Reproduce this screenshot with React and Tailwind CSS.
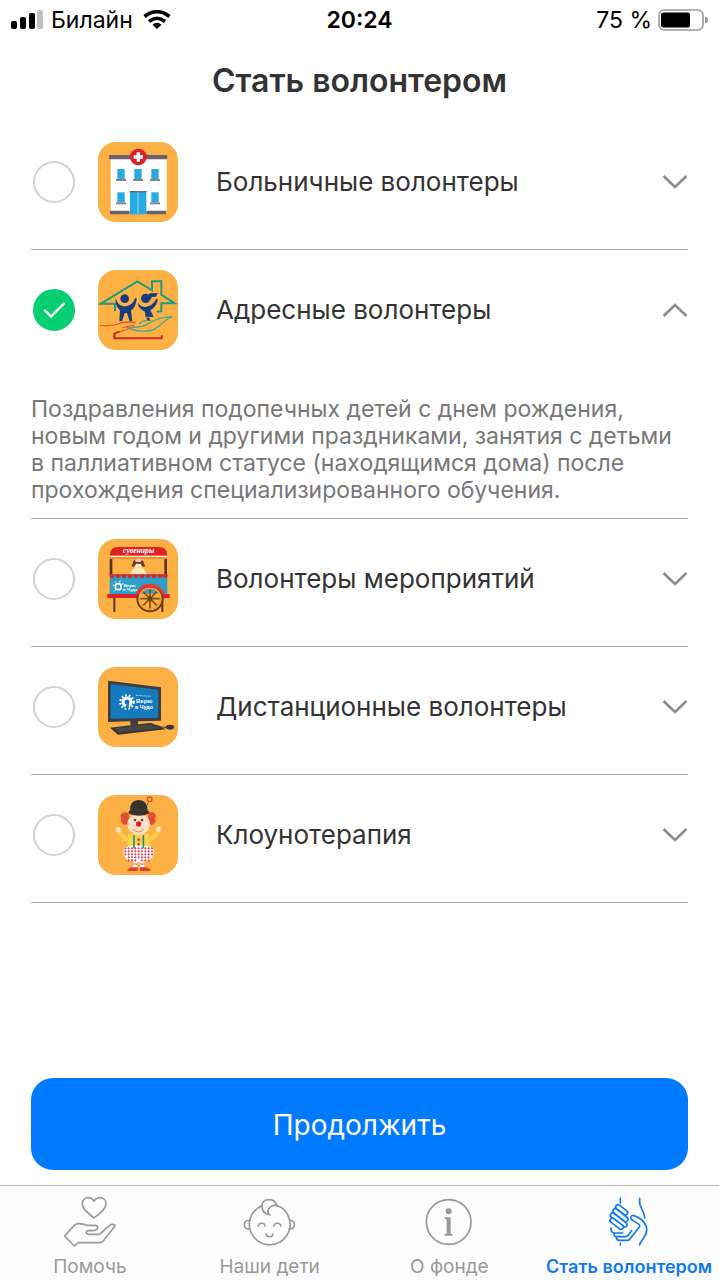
import React, { useState } from "react";

function Tile({ viewBox, x, y, children }) {
  return (
    <svg viewBox={viewBox} className="size-20 shrink-0" aria-hidden="true">
      <rect x={x} y={y} width="240" height="240" rx="54" fill="#fdb043" />
      {children}
    </svg>
  );
}

function HospitalIcon() {
  const windows = [
    [82, 102],
    [133, 102],
    [184, 102],
    [82, 172],
    [184, 172],
  ];
  return (
    <Tile viewBox="24 21 240 240" x={24} y={21}>
      <rect x="62" y="70" width="168" height="158" fill="#fff" />
      <rect x="57" y="60" width="175" height="13" rx="3" fill="#6d5f6b" />
      <path d="M60 227h58v11H60zM170 227h58v11h-58z" fill="#6d5f6b" />
      <circle cx="145" cy="66" r="25" fill="#e01f2d" />
      <path d="M140 52h10v9h9v10h-9v9h-10v-9h-9v-10h9z" fill="#fff" />
      {windows.map(([wx, wy]) => (
        <g key={`${wx}-${wy}`}>
          <rect x={wx} y={wy} width="22" height="30" fill="#27a9e1" />
          <rect x={wx - 4} y={wy + 30} width="30" height="6" fill="#8b7f8c" />
        </g>
      ))}
      <rect x="120" y="169" width="49" height="69" fill="#27a9e1" />
      <path d="M119 168h51v4h-51z" fill="#6d5f6b" />
      <path d="M144 172v66" stroke="#8fd2f0" strokeWidth="3" />
    </Tile>
  );
}

function HomeCareIcon() {
  return (
    <Tile viewBox="24 24 240 240" x={24} y={24}>
      <g fill="none" strokeLinejoin="miter">
        <path
          d="M75 147v-22H33l109-67 44 27V58h28v40l40 26h-40v24l-14 1"
          stroke="#219a7c"
          strokeWidth="6"
        />
        <path
          d="M114 197c24-2 42 0 58-10 24-14 40-22 74-23-28 12-36 32-58 40-24 8-50 4-74-7z"
          stroke="#4aa58b"
          strokeWidth="4"
        />
        <path d="M148 186c6-8 20-12 34-10" stroke="#4aa58b" strokeWidth="4" />
        <path
          d="M138 182c-24-4-40-2-54 4-14 6-34 6-54 4M134 190c-18 0-26 3-38 8M76 212c20-2 32-8 44-14"
          stroke="#e65a2b"
          strokeWidth="4"
        />
        <path d="M88 209l-15 6v14h142v-9" stroke="#bd2c1d" strokeWidth="6" />
      </g>
      <g fill="#173d7d">
        <circle cx="104" cy="110" r="13" />
        <path d="M77 108c5 17 14 25 27 25s25-8 32-25l4 1c-1 20-8 29-17 37l4 32h-8l-8-25h-7l-8 25h-8l2-33C83 138 75 128 77 108z" />
        <circle cx="167" cy="109" r="14" />
        <path d="M174 103l5-9 24-1-5 11-12 1-5 8z" />
        <path d="M143 123c10 11 20 14 31 10 12-4 20-13 25-23l4 1c-1 18-12 28-22 34l10 20-25-1-1-15c-11-5-20-13-22-26z" />
        <path d="M168 166l10 1 2 9-8-2z" />
      </g>
    </Tile>
  );
}

function EventsIcon() {
  const scallops = [66, 84, 102, 120, 138, 156, 174, 192, 210, 226];
  return (
    <Tile viewBox="24 24 240 240" x={24} y={24}>
      <path d="M59 80h8v52h-8zM223 80h8v52h-8z" fill="#5b341d" />
      <path d="M70 196h6v47h-6zM214 196h6v47h-6z" fill="#5b341d" />
      <path d="M60 74v-6q3-20 22-20h127q19 0 22 20v6z" fill="#e02128" />
      <path d="M60 74h171v4H60z" fill="#fbe3d2" />
      <path d="M60 78h171v6H60z" fill="#f0902f" />
      <text
        x="146"
        y="67"
        textAnchor="middle"
        fill="#fff"
        fontSize="23"
        fontStyle="italic"
        fontWeight="700"
        fontFamily="Liberation Serif, serif"
      >
        сувениры
      </text>
      <path d="M119 134q4-20 18-24h17q13 4 17 24z" fill="#ffe8b5" />
      <circle cx="145" cy="101" r="13" fill="#ffe3b8" />
      <path d="M128 98q2-14 17-14t17 14l4 8-9 1-5-9h-14l-5 9-9-1z" fill="#6a3a1c" />
      <path d="M135 86q10-7 20 0l-2 7h-16z" fill="#f7b9c5" />
      <path d="M59 132h173v58H59z" fill="#2e9fc8" />
      <path d="M58 130h175v4H58z" fill="#b8303c" />
      {scallops.map((cx) => (
        <ellipse key={cx} cx={cx} cy="136" rx="6" ry="6" fill="#e02128" />
      ))}
      <circle cx="85" cy="167" r="9" fill="none" stroke="#fff" strokeWidth="5" />
      <path d="M74 164l-5-2M78 155l-3-4M89 154l1-5M96 160l4-3M77 177l-4 4" stroke="#fff" strokeWidth="3" />
      <g fill="#fff" fontSize="13" fontWeight="700" fontFamily="Liberation Sans, sans-serif">
        <text x="101" y="167">Верю</text>
        <text x="99" y="180">в Чудо</text>
      </g>
      <rect x="52" y="189" width="187" height="12" fill="#e02128" />
      <circle cx="180" cy="203" r="38" fill="#fdb043" stroke="#6b3d16" strokeWidth="6" />
      <path d="M152 188q8-18 28-18t28 18z" fill="#3c9cc0" />
      <path d="M146 203h68M180 170v66M157 180l46 46M157 226l46-46" stroke="#8a4e18" strokeWidth="5" />
      <circle cx="180" cy="203" r="31" fill="none" stroke="#f0a339" strokeWidth="4" />
      <path d="M138 190q8-32 42-32t44 32l-7 2q-9-22-37-22t-34 22z" fill="#df3b31" />
      <circle cx="180" cy="203" r="7" fill="#6b3d16" />
    </Tile>
  );
}

function RemoteIcon() {
  return (
    <Tile viewBox="24 22 240 240" x={24} y={22}>
      <path d="M54 63l159 20v100l-69 2v10l-23 1v-11l-67 2z" fill="#3f3c3b" />
      <path d="M62 73l143 17v84l-143 3z" fill="#1579bd" />
      <path d="M60 204l122-15 46 20-144 16z" fill="#383637" />
      <path d="M72 206l110-12 26 12-122 12z" fill="#4a4746" />
      <path d="M226 202q3-8 15-7 13 1 12 8-2 8-14 7-12-1-13-8z" fill="#3b3938" />
      <path d="M227 203q-16 0-27-6" fill="none" stroke="#3b3938" strokeWidth="3" />
      <circle cx="111" cy="127" r="20" fill="none" stroke="#fff" strokeWidth="7" strokeDasharray="5 6" />
      <circle cx="111" cy="127" r="12" fill="none" stroke="#fff" strokeWidth="9" />
      <path d="M112 124q8 8 3 24l-10-3q7-9 4-19z" fill="#1579bd" />
      <path d="M138 107l45 3" stroke="#a8d0ea" strokeWidth="3" strokeDasharray="3 1" />
      <g fill="#fff" fontSize="18" fontWeight="700" fontFamily="Liberation Sans, sans-serif">
        <text x="138" y="130">Верю</text>
        <text x="135" y="149" fontSize="16">в Чудо</text>
      </g>
    </Tile>
  );
}

function ClownIcon() {
  const dots = [];
  for (let r = 0; r < 5; r++) {
    for (let c = 0; c < 9; c++) {
      if ((r > 2 && (c === 0 || c === 8)) || (r === 4 && c === 4)) continue;
      dots.push([106 + c * 10, 184 + r * 9]);
    }
  }
  return (
    <Tile viewBox="24 24 240 240" x={24} y={24}>
      <path d="M86 131q8 22 34 30M205 130q-8 22-32 31" fill="none" stroke="#f7cf4c" strokeWidth="13" />
      <circle cx="85" cy="128" r="8" fill="#fde0b5" />
      <circle cx="206" cy="126" r="8" fill="#fde0b5" />
      <path d="M115 142q30-9 63 0l4 44h-69z" fill="#f8d350" />
      <path d="M116 80q-12-8-20 0-8 6-2 14-4 12 6 18 10 4 20-4zM176 80q12-8 18 0 7 6 1 14 5 12-5 18-10 4-19-4z" fill="#e04d34" />
      <ellipse cx="146" cy="112" rx="34" ry="31" fill="#fce0c1" />
      <path d="M117 80q-4-8 3-9-1-32 26-32t27 32q9 1 3 9-28 12-59 0z" fill="#383331" />
      <path d="M172 55l3-9" stroke="#428c5b" strokeWidth="3" />
      <circle cx="179" cy="37" r="7" fill="none" stroke="#e04d34" strokeWidth="4" />
      <circle cx="135" cy="99" r="4" fill="#504541" />
      <circle cx="156" cy="99" r="4" fill="#504541" />
      <circle cx="146" cy="111" r="8" fill="#d91e2b" />
      <path d="M128 126q17 18 34 0" fill="none" stroke="#e67b69" strokeWidth="3" />
      <path d="M102 181q43-13 87 0 8 23-11 40l-30 5-33-5q-20-15-13-40z" fill="#fff" />
      {dots.map(([cx, cy]) => (
        <path key={`${cx}-${cy}`} d={`M${cx} ${cy - 4}l4 4-4 4-4-4z`} fill="#d9475d" />
      ))}
      <path d="M132 145v39M160 145v39" stroke="#2b8c80" strokeWidth="5" />
      <circle cx="146" cy="158" r="4" fill="#df3b31" />
      <circle cx="146" cy="172" r="4" fill="#df3b31" />
      <path d="M130 225h12v18h-12zM151 225h12v18h-12z" fill="#fff" />
      <path d="M130 231h12M151 231h12" stroke="#d9475d" strokeWidth="3" />
      <path d="M112 252q1-10 19-11h12v11zM150 252v-11h12q18 1 20 11z" fill="#dc3d2d" />
    </Tile>
  );
}

const OPTIONS = [
  { id: "hospital", title: "Больничные волонтеры", Icon: HospitalIcon },
  {
    id: "home",
    title: "Адресные волонтеры",
    Icon: HomeCareIcon,
    text: "Поздравления подопечных детей с днем рождения, новым годом и другими праздниками, занятия с детьми в паллиативном статусе (находящимся дома) после прохождения специализированного обучения.",
  },
  { id: "events", title: "Волонтеры мероприятий", Icon: EventsIcon },
  { id: "remote", title: "Дистанционные волонтеры", Icon: RemoteIcon },
  { id: "clown", title: "Клоунотерапия", Icon: ClownIcon },
];

function Option({ option, checked, open, onSelect, onToggle }) {
  const { id, title, text, Icon } = option;
  return (
    <li className="border-b border-[#a9a9a9] pt-5">
      <div className="flex items-center pb-[27px] pl-[2px]">
        <span className="relative mr-[23px] size-[42px] shrink-0">
          <input
            id={id}
            type="radio"
            name="volunteer"
            checked={checked}
            onChange={onSelect}
            className="block size-[42px] appearance-none rounded-full border-2 border-[#d2d2d2] bg-white checked:border-[#07ce73] checked:bg-[#07ce73]"
          />
          {checked && (
            <svg viewBox="0 0 42 42" className="pointer-events-none absolute inset-0" fill="none" aria-hidden="true">
              <path d="M12 21.500l6 6L31 14.500" stroke="#fff" strokeWidth="2.400" strokeLinecap="round" />
            </svg>
          )}
        </span>
        <label htmlFor={id} className="flex min-w-0 flex-1 items-center gap-[38px] text-[26px] leading-8 text-[#333]">
          <Icon />
          {title}
        </label>
        <button type="button" aria-expanded={open} aria-label={title} onClick={onToggle} className="shrink-0">
          <svg viewBox="0 0 26 26" className="size-[26px]" fill="none" stroke="#8c8c8c" strokeWidth="2.600" aria-hidden="true">
            <path d={open ? "M1.500 19L13 8l11.500 11" : "M1.500 7L13 18 24.500 7"} />
          </svg>
        </button>
      </div>
      {open && text && (
        <p className="pt-[19px] pb-[14px] text-[23px] leading-[27px] text-[#777]">{text}</p>
      )}
    </li>
  );
}

function HelpIcon() {
  return (
    <svg viewBox="189 45 162 162" className="size-[54px]" fill="none" stroke="currentColor" strokeWidth="5" strokeLinejoin="round" strokeLinecap="round" aria-hidden="true">
      <path d="M282 114c-12-11-35-23-35-44 0-10 8-17 17-17 8 0 14 4 18 11 4-7 10-11 18-11 10 0 18 7 18 17 0 21-24 33-36 44z" />
      <path d="M194 168l28-31q5-5 12-6 14-1 26 5h25q8 0 8 6 0 8-9 9l-18 1q-7 0-7 5 0 6 8 6h28q5 0 8-4l25-22q8-6 16-2 2 3-2 7l-32 40q-5 6-12 6h-62l-13 10z" />
    </svg>
  );
}

function ChildIcon() {
  return (
    <svg viewBox="729 45 162 162" className="size-[54px]" fill="none" stroke="currentColor" strokeWidth="5" strokeLinecap="round" aria-hidden="true">
      <path d="M786 77a61 61 0 1 0 44-1" />
      <path d="M830 75c-4-11-12-16-23-16-14 0-21 9-21 20 0 13 8 23 22 25-4-4-5-10-3-15 4-10 15-15 25-12" />
      <path d="M747 122c-9-2-14 4-14 12 0 9 7 15 16 13M869 122c9-2 14 4 14 12 0 9-7 15-16 13" />
      <path d="M775 138c1-11 19-11 20 0M822 138c1-11 19-11 20 0M798 162c1 11 20 11 21 0" />
    </svg>
  );
}

function InfoIcon() {
  return (
    <svg viewBox="189 45 162 162" className="size-[54px]" aria-hidden="true">
      <circle cx="269" cy="126" r="67" fill="none" stroke="currentColor" strokeWidth="5" />
      <circle cx="269" cy="94" r="9" fill="currentColor" />
      <path d="M257 112h18v49l6 2v4h-25v-4l7-2v-42l-6-3z" fill="currentColor" />
    </svg>
  );
}

function HandsIcon() {
  const fingers = ["M51 45l22 17", "M43 57l31 25", "M35 70l36 28", "M34 85l26 20"];
  return (
    <svg viewBox="3 9 162 162" className="size-[54px]" fill="none" stroke="currentColor" strokeWidth="5" strokeLinejoin="round" strokeLinecap="round" aria-hidden="true">
      <path d="M58 19v14M58 155v4M116 19v16c2 12 14 22 15 43" />
      <path d="M92 83q-7-9 4-13 31 9 40 33 5 18-10 38-9 10-10 18" />
      <path d="M92 83l22 14q4 3 1 8l-29 37q-3 3-7 3H55q-8 0-9-8" />
      <path d="M30 108q-1 14 10 15h25M39 124q-1 10 9 10h25q4 0 7-3l12-15" />
      {fingers.map((d) => (
        <g key={d}>
          <path d={d} strokeWidth="19" />
          <path d={d} stroke="#fdfdfd" strokeWidth="9" />
        </g>
      ))}
    </svg>
  );
}

const TABS = [
  { label: "Помочь", Icon: HelpIcon },
  { label: "Наши дети", Icon: ChildIcon },
  { label: "О фонде", Icon: InfoIcon },
  { label: "Стать волонтером", Icon: HandsIcon, active: true },
];

function StatusBar() {
  return (
    <div className="grid h-10 grid-cols-3 items-center px-[11px] text-[23px] leading-7 text-black">
      <div className="flex items-center">
        <svg viewBox="0 0 32 20" className="mr-2 h-5 w-8" aria-hidden="true">
          <rect x="0" y="11" width="6" height="8" rx="2" />
          <rect x="9" y="7" width="6" height="12" rx="2" />
          <rect x="18" y="3" width="6" height="16" rx="2" />
          <rect x="26" y="0" width="6" height="19" rx="2" fill="#bfbfbf" />
        </svg>
        <span>Билайн</span>
        <svg viewBox="0 0 28 20" className="ml-[10px] h-5 w-7" fill="none" stroke="#000" strokeWidth="3.600" aria-hidden="true">
          <path d="M1.500 6.500Q14-3 26.500 6.500M6 11.500Q14 5 22 11.500" />
          <path d="M9.500 14.700Q14 11 18.500 14.700L14 19z" fill="#000" stroke="none" />
        </svg>
      </div>
      <span className="text-center font-semibold">20:24</span>
      <div className="flex items-center justify-end gap-[6px]">
        <span>75 %</span>
        <svg viewBox="0 0 50 22" className="h-[22px] w-[50px]" aria-hidden="true">
          <rect x="1" y="1" width="44" height="20" rx="5" fill="none" stroke="#9b9b9b" strokeWidth="1.600" />
          <rect x="3" y="3.500" width="29" height="15" rx="2" />
          <path d="M47 7.500q3 1 3 3.500t-3 3.500z" fill="#9b9b9b" />
        </svg>
      </div>
    </div>
  );
}

export default function App() {
  const [selected, setSelected] = useState("home");
  const [opened, setOpened] = useState("home");
  return (
    <div className="flex min-h-screen flex-col bg-white font-['Inter',sans-serif]">
      <StatusBar />
      <main className="flex flex-1 flex-col px-[31px] pb-[15px]">
        <h1 className="py-[21px] text-center text-[32px] leading-10 font-semibold text-[#333]">Стать волонтером</h1>
        <ul className="flex-1">
          {OPTIONS.map((option) => (
            <Option
              key={option.id}
              option={option}
              checked={selected === option.id}
              open={opened === option.id}
              onSelect={() => setSelected(option.id)}
              onToggle={() => setOpened(opened === option.id ? "" : option.id)}
            />
          ))}
        </ul>
        <button type="button" className="h-[92px] w-full rounded-[22px] bg-[#007aff] pt-[2px] text-[28px] leading-8 text-white">
          Продолжить
        </button>
      </main>
      <nav className="grid grid-cols-4 border-t border-[#b2b2b2] bg-[#fdfdfd]">
        {TABS.map(({ label, Icon, active }) => (
          <a
            key={label}
            href="#"
            aria-current={active ? "page" : undefined}
            className={`flex flex-col items-center gap-[6px] pt-[9px] pb-[1px] leading-6 whitespace-nowrap ${
              active ? "text-[18px] font-semibold text-[#0f7aee]" : "text-[19px] text-[#999]"
            }`}
          >
            <Icon />
            {label}
          </a>
        ))}
      </nav>
    </div>
  );
}
